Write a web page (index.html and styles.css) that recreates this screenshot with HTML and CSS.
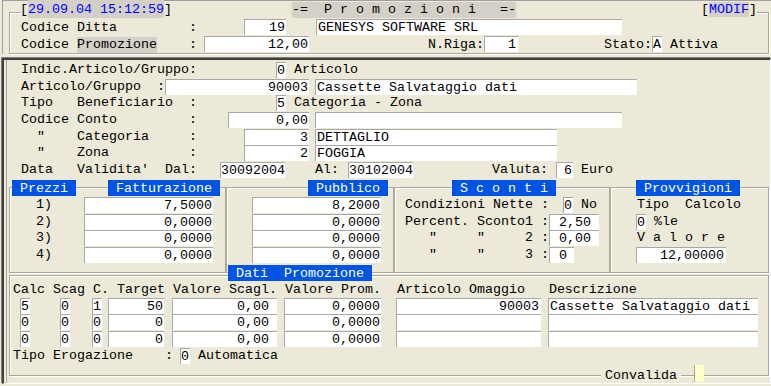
FILE: index.html
```html
<!DOCTYPE html>
<html lang="it">
<head>
    <meta charset="UTF-8">
    <meta name="viewport" content="width=device-width, initial-scale=1.0">
    <title>Promozioni</title>
    <link rel="stylesheet" href="styles.css">
</head>
<body>
    <div class="top">
        <div class="top-box">
            <div class="title-row">
                <span>[<span class="hl blue date">29.09.04 15:12:59</span>]</span>
                <span class="hl title">-=  P r o m o z i o n i   =-</span>
                <span class="modif">[<span class="hl blue">MODIF</span>]</span>
            </div>
            <div class="row top-row first">
                <span>Codice Ditta         :</span>
                <span class="in r f-ditta">19</span>
                <span class="in f-ragsoc">GENESYS SOFTWARE SRL</span>
            </div>
            <div class="row top-row">
                <span>Codice <span class="hl">Promozione</span>    :</span>
                <span class="in r f-promo">12,00</span>
                <span class="lbl-riga">N.Riga:</span>
                <span class="in r f-riga">1</span>
                <span class="lbl-stato">Stato:</span>
                <span class="in ch">A</span>
                <span> Attiva</span>
            </div>
        </div>
    </div>

    <div class="panel">
        <div class="sec-a">
            <div class="row">
                <span>Indic.Articolo/Gruppo:</span>
                <span class="in ch m-flag">0</span>
                <span> Articolo</span>
            </div>
            <div class="row">
                <span>Articolo/Gruppo  :</span>
                <span class="in r f-art">90003</span>
                <span class="in f-artdes">Cassette Salvataggio dati</span>
            </div>
            <div class="row">
                <span>Tipo   Beneficiario  :</span>
                <span class="in ch m-flag">5</span>
                <span> Categoria - Zona</span>
            </div>
            <div class="row">
                <span>Codice Conto         :</span>
                <span class="in r f-conto">0,00</span>
                <span class="in f-contodes"></span>
            </div>
            <div class="row">
                <span>  "    Categoria     :</span>
                <span class="in r f-cod">3</span>
                <span class="in f-coddes">DETTAGLIO</span>
            </div>
            <div class="row">
                <span>  "    Zona          :</span>
                <span class="in r f-cod">2</span>
                <span class="in f-coddes">FOGGIA</span>
            </div>
            <div class="row">
                <span>Data   Validita'  Dal:</span>
                <span class="in f-dal">30092004</span>
                <span class="lbl-al">Al:</span>
                <span class="in f-al">30102004</span>
                <span class="lbl-valuta">Valuta:</span>
                <span class="in r f-valuta">6</span>
                <span> Euro</span>
            </div>
        </div>

        <div class="groups">
            <div class="grp g-fatt">
                <div class="grp-head">
                    <span class="tab t-prezzi">Prezzi</span>
                    <span class="tab t-fatt">Fatturazione</span>
                </div>
                <div class="grp-body">
                    <div class="row"><span class="num">1)</span><span class="in r f-prezzo">7,5000</span></div>
                    <div class="row"><span class="num">2)</span><span class="in r f-prezzo">0,0000</span></div>
                    <div class="row"><span class="num">3)</span><span class="in r f-prezzo">0,0000</span></div>
                    <div class="row"><span class="num">4)</span><span class="in r f-prezzo">0,0000</span></div>
                </div>
            </div>
            <div class="grp g-pubb">
                <div class="grp-head">
                    <span class="tab t-pubb">Pubblico</span>
                </div>
                <div class="grp-body">
                    <div class="row"><span class="in r f-pubb">8,2000</span></div>
                    <div class="row"><span class="in r f-pubb">0,0000</span></div>
                    <div class="row"><span class="in r f-pubb">0,0000</span></div>
                    <div class="row"><span class="in r f-pubb">0,0000</span></div>
                </div>
            </div>
            <div class="grp g-sconti">
                <div class="grp-head">
                    <span class="tab t-sconti">S c o n t i</span>
                </div>
                <div class="grp-body pad-sconti">
                    <div class="row"><span>Condizioni Nette :</span><span class="in ch m-nette">0</span><span> No</span></div>
                    <div class="row"><span>Percent. Sconto1 :</span><span class="in f-sconto">2,50</span></div>
                    <div class="row"><span>   "     "     2 :</span><span class="in f-sconto">0,00</span></div>
                    <div class="row"><span>   "     "     3 :</span><span class="in f-sconto short">0</span></div>
                </div>
            </div>
            <div class="grp g-provv">
                <div class="grp-head">
                    <span class="tab t-provv">Provvigioni</span>
                </div>
                <div class="grp-body pad-provv">
                    <div class="row"><span class="txt-provv">Tipo  Calcolo</span></div>
                    <div class="row"><span class="in ch">0</span><span> %le</span></div>
                    <div class="row"><span class="txt-provv">V a l o r e</span></div>
                    <div class="row"><span class="in r f-valore">12,00000</span></div>
                </div>
            </div>
        </div>

        <div class="grp g-dati">
            <div class="grp-head dati-head">
                <span class="tab t-dati">Dati  Promozione</span>
            </div>
            <div class="row cols-head">Calc Scag C. Target Valore Scagl. Valore Prom.  Articolo Omaggio   Descrizione</div>
            <div class="row">
                <span class="in ch c-calc">5</span>
                <span class="in ch c-scag">0</span>
                <span class="in ch c-c">1</span>
                <span class="in r c-target">50</span>
                <span class="in r c-scagl">0,00</span>
                <span class="in r c-prom">0,0000</span>
                <span class="in r c-omaggio">90003</span>
                <span class="in c-descr">Cassette Salvataggio dati</span>
            </div>
            <div class="row">
                <span class="in ch c-calc">0</span>
                <span class="in ch c-scag">0</span>
                <span class="in ch c-c">0</span>
                <span class="in r c-target">0</span>
                <span class="in r c-scagl">0,00</span>
                <span class="in r c-prom">0,0000</span>
                <span class="in r c-omaggio"></span>
                <span class="in c-descr"></span>
            </div>
            <div class="row">
                <span class="in ch c-calc">0</span>
                <span class="in ch c-scag">0</span>
                <span class="in ch c-c">0</span>
                <span class="in r c-target">0</span>
                <span class="in r c-scagl">0,00</span>
                <span class="in r c-prom">0,0000</span>
                <span class="in r c-omaggio"></span>
                <span class="in c-descr"></span>
            </div>
            <div class="row erog">
                <span>Tipo Erogazione    :</span>
                <span class="in ch m-erog">0</span>
                <span> Automatica</span>
            </div>
            <div class="footer">
                <span class="convalida">Convalida</span>
                <span class="flag-box"></span>
            </div>
        </div>
    </div>
</body>
</html>
```

FILE: styles.css
```css
body {
    margin: 0;
    width: 771px;
    height: 386px;
    overflow: hidden;
    background-color: #ece9d8;
    color: #000;
    font-family: "Liberation Mono", "DejaVu Sans Mono", monospace;
    font-size: 13.34px;
}

/* generic row / field */
.row {
    display: flex;
    align-items: flex-start;
    height: 16.67px;
    line-height: 16.67px;
    white-space: pre;
}

.in {
    display: block;
    box-sizing: border-box;
    height: 16px;
    line-height: 15px;
    background-color: #fff;
    border-top: 1px solid #a8a8a8;
    border-left: 1px solid #a8a8a8;
    white-space: pre;
    overflow: hidden;
}

.in.r {
    text-align: right;
    padding-right: 1px;
}

.in.ch {
    width: 10px;
}

.hl {
    background-color: #d4d0c8;
}

.blue {
    color: #0000ff;
}

/* top header */
.top {
    margin-left: 2px;
    height: 53px;
    border-top: 1px solid #a0a0a0;
    border-left: 1px solid #a0a0a0;
}

.top-box {
    margin: 11px 2px 0 6px;
    height: 40px;
    border: 1px solid #aca899;
    box-shadow: inset 1px 1px 0 #fff, 1px 1px 0 #fff;
}

.title-row {
    display: flex;
    margin: -11px 11px 0 10px;
    height: 16px;
    line-height: 16px;
    background-color: #ece9d8;
    white-space: pre;
}

.title-row .date {
    display: inline-block;
    height: 18px;
    margin-top: -2px;
    line-height: 20px;
}

.title {
    margin-left: 120px;
}

.modif {
    margin-left: auto;
}

.top-row {
    height: 17px;
    line-height: 17px;
    padding-left: 11px;
}

.top-row.first {
    margin-top: 1px;
}

.top-row .hl {
    display: inline-block;
    line-height: 16px;
}

.f-ditta { margin-left: 47px; width: 42px; padding-right: 2px; }
.f-ragsoc { margin-left: 30px; width: 306px; padding-left: 1px; }
.f-promo { margin-left: 7px; width: 105px; }
.lbl-riga { margin-left: 119px; }
.f-riga { width: 34px; }
.in.f-riga { padding-right: 2px; }
.lbl-stato { margin-left: 86px; }

/* main panel */
.panel {
    margin: 4px 0 0 2px;
    height: 323px;
    border-top: 2px solid #404040;
    border-left: 2px solid #404040;
    border-right: 1px solid #fff;
    border-bottom: 1px solid #fff;
    box-shadow: -1px -1px 0 #808080, inset 2px 0 0 #ece9d8, inset 3px 0 0 #aca899;
}

.sec-a {
    padding: 2px 0 0 17px;
}

.m-flag { margin-left: 79px; }
.f-art { width: 144px; }
.f-artdes { margin-left: 6px; width: 322px; padding-left: 1px; }
.f-conto { margin-left: 31px; width: 81px; }
.f-contodes { margin-left: 6px; width: 307px; }
.f-cod { margin-left: 47px; width: 65px; }
.f-coddes { margin-left: 6px; width: 242px; padding-left: 1px; }
.f-dal { margin-left: 23px; width: 65px; }
.lbl-al { margin-left: 30px; }
.f-al { margin-left: 9px; width: 65px; }
.lbl-valuta { margin-left: 79px; }
.f-valuta { margin-left: 8px; width: 17px; }

/* group boxes */
.grp {
    box-sizing: border-box;
    border: 1px solid #aca899;
    box-shadow: inset 1px 1px 0 #fff, 1px 1px 0 #fff;
}

.groups {
    display: flex;
    margin: 8.33px 0 0 5px;
}

.groups .grp {
    height: 86px;
}

.g-fatt { width: 217px; }
.g-pubb { width: 168px; }
.g-sconti { width: 216px; }
.g-provv { width: 159px; }

.grp-head {
    display: flex;
    height: 16px;
    margin-top: -8px;
}

.tab {
    position: relative;
    height: 16px;
    line-height: 17px;
    padding: 0 8px;
    background-color: #0054e3;
    color: #fff;
    white-space: pre;
}

.t-prezzi { margin-left: 2px; }
.t-fatt { margin-left: 32px; }
.t-pubb { margin-left: 81px; }
.t-sconti { margin-left: 57px; }
.t-provv { margin-left: 25px; }

.grp-body {
    padding-top: 1px;
}

.num { margin-left: 26px; }
.f-prezzo { margin-left: 32px; width: 129px; }
.f-pubb { margin-left: 25px; width: 129px; }

.pad-sconti { padding-left: 10px; }
.m-nette { margin-left: 14px; }
.f-sconto { width: 50px; padding-left: 9px; }
.f-sconto.short { width: 25px; }

.pad-provv { padding-left: 25px; }
.txt-provv { margin-left: 1px; }
.f-valore { width: 90px; }
.in.f-valore { padding-right: 2px; }

/* dati promozione */
.g-dati {
    margin: 2px 0 0 5px;
    width: 760px;
}

.dati-head {
    margin-top: -11px;
}

.t-dati { margin-left: 218px; }

.cols-head {
    padding-left: 3px;
    line-height: 18px;
}

.c-calc { margin-left: 10px; }
.c-scag { margin-left: 30px; }
.c-c { margin-left: 22px; }
.c-target { margin-left: 6px; width: 56px; }
.in.c-scagl { margin-left: 8px; width: 105px; padding-right: 8px; }
.c-prom { margin-left: 7px; width: 97px; }
.in.c-omaggio { margin-left: 15px; width: 145px; padding-right: 2px; }
.c-descr { margin-left: 7px; width: 210px; padding-left: 1px; }

.erog {
    padding-left: 3px;
}

.m-erog { margin-left: 7px; }

.footer {
    display: flex;
    justify-content: flex-end;
    height: 17px;
    margin: 0.67px 0 -7px 0;
    line-height: 17px;
}

.convalida {
    padding: 2px 4px 0;
    background-color: #ece9d8;
}

.flag-box {
    box-sizing: border-box;
    width: 10px;
    height: 17px;
    margin: 0 64px 0 13px;
    background-color: #ffffc8;
    border-left: 1px solid #a8a8a8;
}
```
